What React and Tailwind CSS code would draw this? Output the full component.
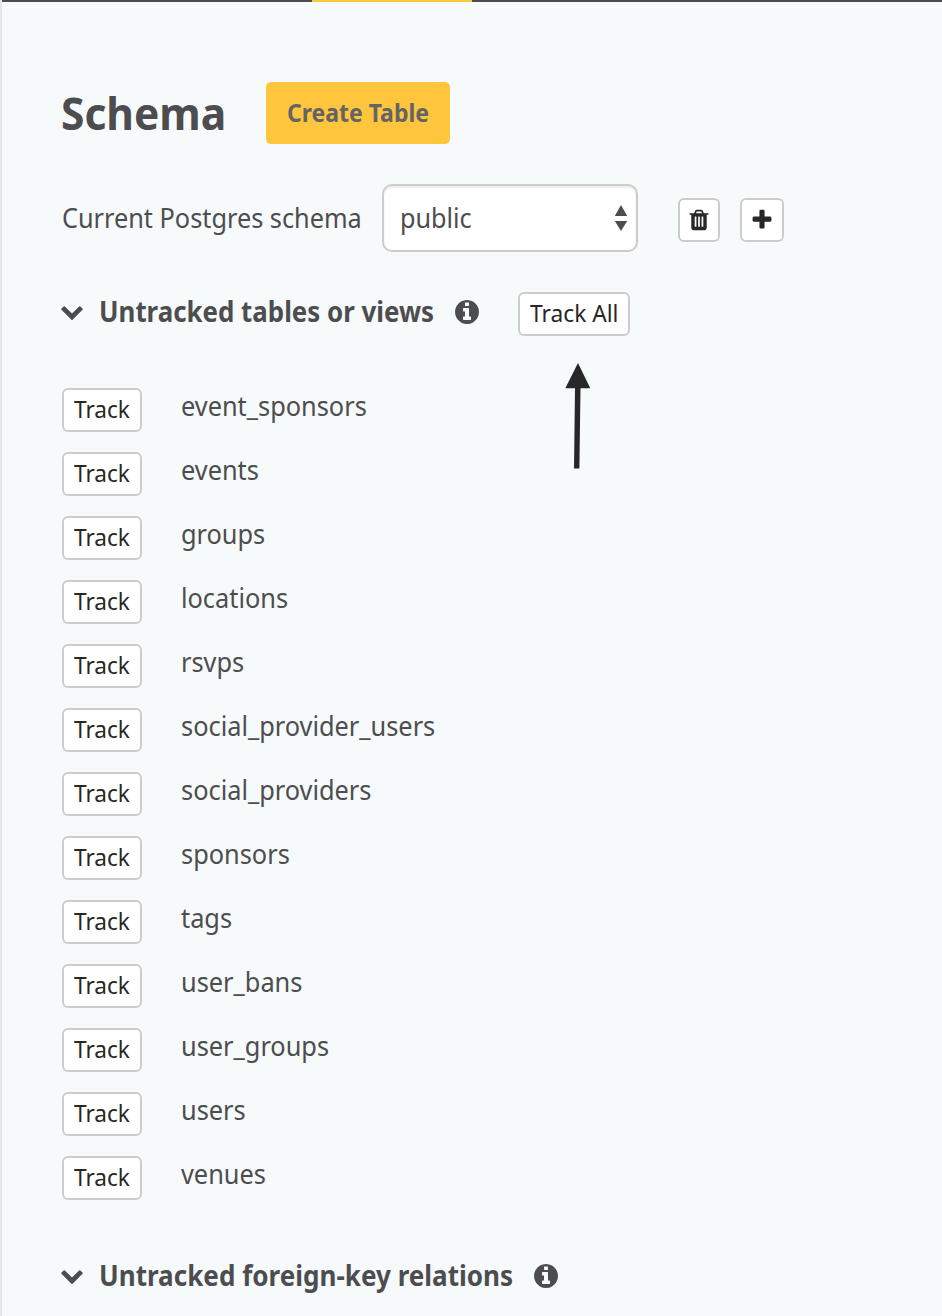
const PATHS = {
  chevron: 'M1683 808l-742 741q-19 19-45 19t-45-19l-742-741q-19-19-19-45.5t19-45.5l166-165q19-19 45-19t45 19l531 531 531-531q19-19 45-19t45 19l166 165q19 19 19 45.5t-19 45.5z',
  info: 'M1152 1376v-160q0-14-9-23t-23-9h-96v-512q0-14-9-23t-23-9h-320q-14 0-23 9t-9 23v160q0 14 9 23t23 9h96v320h-96q-14 0-23 9t-9 23v160q0 14 9 23t23 9h448q14 0 23-9t9-23zm-128-896v-160q0-14-9-23t-23-9h-192q-14 0-23 9t-9 23v160q0 14 9 23t23 9h192q14 0 23-9t9-23zm640 416q0 209-103 385.5t-279.5 279.5-385.5 103-385.5-103-279.5-279.5-103-385.5 103-385.5 279.5-279.5 385.5-103 385.5 103 279.5 279.5 103 385.5z',
  trash: 'M704 1376v-704q0-14-9-23t-23-9h-64q-14 0-23 9t-9 23v704q0 14 9 23t23 9h64q14 0 23-9t9-23zm256 0v-704q0-14-9-23t-23-9h-64q-14 0-23 9t-9 23v704q0 14 9 23t23 9h64q14 0 23-9t9-23zm256 0v-704q0-14-9-23t-23-9h-64q-14 0-23 9t-9 23v704q0 14 9 23t23 9h64q14 0 23-9t9-23zm-544-992h448l-48-117q-7-9-17-11h-317q-10 2-17 11zm928 32v64q0 14-9 23t-23 9h-96v948q0 83-47 143.5t-113 60.5h-832q-66 0-113-58.5t-47-141.5v-952h-96q-14 0-23-9t-9-23v-64q0-14 9-23t23-9h309l70-167q15-37 54-63t79-26h320q40 0 79 26t54 63l70 167h309q14 0 23 9t9 23z',
  plus: 'M1600 736v192q0 40-28 68t-68 28h-416v416q0 40-28 68t-68 28h-192q-40 0-68-28t-28-68v-416h-416q-40 0-68-28t-28-68v-192q0-40 28-68t68-28h416v-416q0-40 28-68t68-28h192q40 0 68 28t28 68v416h416q40 0 68 28t28 68z',
};

const TABLES = [
  'event_sponsors', 'events', 'groups', 'locations', 'rsvps', 'social_provider_users',
  'social_providers', 'sponsors', 'tags', 'user_bans', 'user_groups', 'users', 'venues',
];

function Icon({ name, className }) {
  return (
    <svg viewBox="0 0 1792 1792" fill="currentColor" className={`block shrink-0 ${className}`}>
      <path d={PATHS[name]} />
    </svg>
  );
}

function Label({ className, children }) {
  return <span className={`block origin-left whitespace-nowrap ${className}`}>{children}</span>;
}

function Button({ className, children }) {
  return (
    <button className={`flex h-11 shrink-0 items-center rounded-[6px] border-2 border-[#cccccc] bg-white text-[24px] leading-[37px] text-[#272727] ${className}`}>
      {children}
    </button>
  );
}

function SectionTitle({ children, width }) {
  return (
    <>
      <Icon name="chevron" className="mt-[7px] mr-[15px] -ml-[2px] size-6" />
      <h2 className={`shrink-0 ${width}`}>{children}</h2>
      <Icon name="info" className="mt-[6px] size-7" />
    </>
  );
}

export default function App() {
  return (
    <div className="relative h-[1316px] w-[942px] overflow-hidden border-l-2 border-[#e5e6e7] bg-[#f7fafb] font-['Noto_Sans','Open_Sans',sans-serif] text-[#4d4d4f]">
      <div className="flex h-[2px] bg-[#4d4d4f]">
        <div className="ml-[310px] w-40 bg-[#ffc53d]" />
      </div>

      <main className="pt-20 pl-[60px]">
        <header className="flex h-[62px]">
          <h1 className="w-[204px] text-[45px] leading-[61px] font-bold">
            <Label className="-ml-px scale-x-[0.944]">Schema</Label>
          </h1>
          <button className="h-[62px] w-[184px] rounded-[5px] bg-[#ffc53d] pb-[2px] pl-[21px] text-left text-[25px] leading-[58px] font-bold text-[#646464]">
            <Label className="scale-x-[0.919]">Create Table</Label>
          </button>
        </header>

        <div className="mt-10 flex h-[68px] items-center">
          <div className="w-[320px] pb-[2px] text-[28px] leading-[38px]">
            <Label className="scale-x-[0.903]">Current Postgres schema</Label>
          </div>
          <div className="flex h-[68px] w-64 items-center justify-between rounded-[10px] border-2 border-[#cccccc] bg-white pr-[8px] pl-[16px] text-[28px] leading-[38px] shadow-[inset_0_2px_2px_rgba(0,0,0,0.075)]">
            <Label className="-mt-[2px] scale-x-[0.9]">public</Label>
            <svg viewBox="0 0 14 28" className="h-7 w-[14px]" fill="currentColor">
              <path d="M7 1l6.2 11H.8zM7 27L.8 17h12.4z" />
            </svg>
          </div>
          <Button className="mt-1 ml-10 w-[42px] justify-center"><Icon name="trash" className="size-6" /></Button>
          <Button className="mt-1 ml-5 w-11 justify-center"><Icon name="plus" className="size-6" /></Button>
        </div>

        <section className="mt-10">
          <div className="relative flex h-11 text-[28px] leading-[38px] font-bold">
            <SectionTitle width="w-[354px]"><Label className="scale-x-[0.924]">Untracked tables or views</Label></SectionTitle>
            <Button className="ml-[37px] w-28 pb-[4px] pl-[10px] font-normal">
              <Label className="scale-x-[0.948]">Track All</Label>
            </Button>
            <svg viewBox="0 0 30 110" className="absolute top-[70px] left-[500px] h-[110px] w-[30px]" fill="#282828">
              <path d="M16 1l12.3 25.2h-9.8L17.4 106.500h-5.400L13 26.200H3.300z" />
            </svg>
          </div>

          <ul className="mt-[52px] flex flex-col gap-5">
            {TABLES.map((name) => (
              <li key={name} className="flex h-11">
                <Button className="w-20 pb-[4px] pl-[10px]"><Label className="scale-x-[0.94]">Track</Label></Button>
                <div className="ml-[39px] text-[28px] leading-[34px]">
                  <Label className="scale-x-[0.905]">{name}</Label>
                </div>
              </li>
            ))}
          </ul>
        </section>

        <section className="mt-14 flex text-[28px] leading-[38px] font-bold">
          <SectionTitle width="w-[433px]"><Label className="scale-x-[0.931]">Untracked foreign-key relations</Label></SectionTitle>
        </section>
      </main>
    </div>
  );
}
